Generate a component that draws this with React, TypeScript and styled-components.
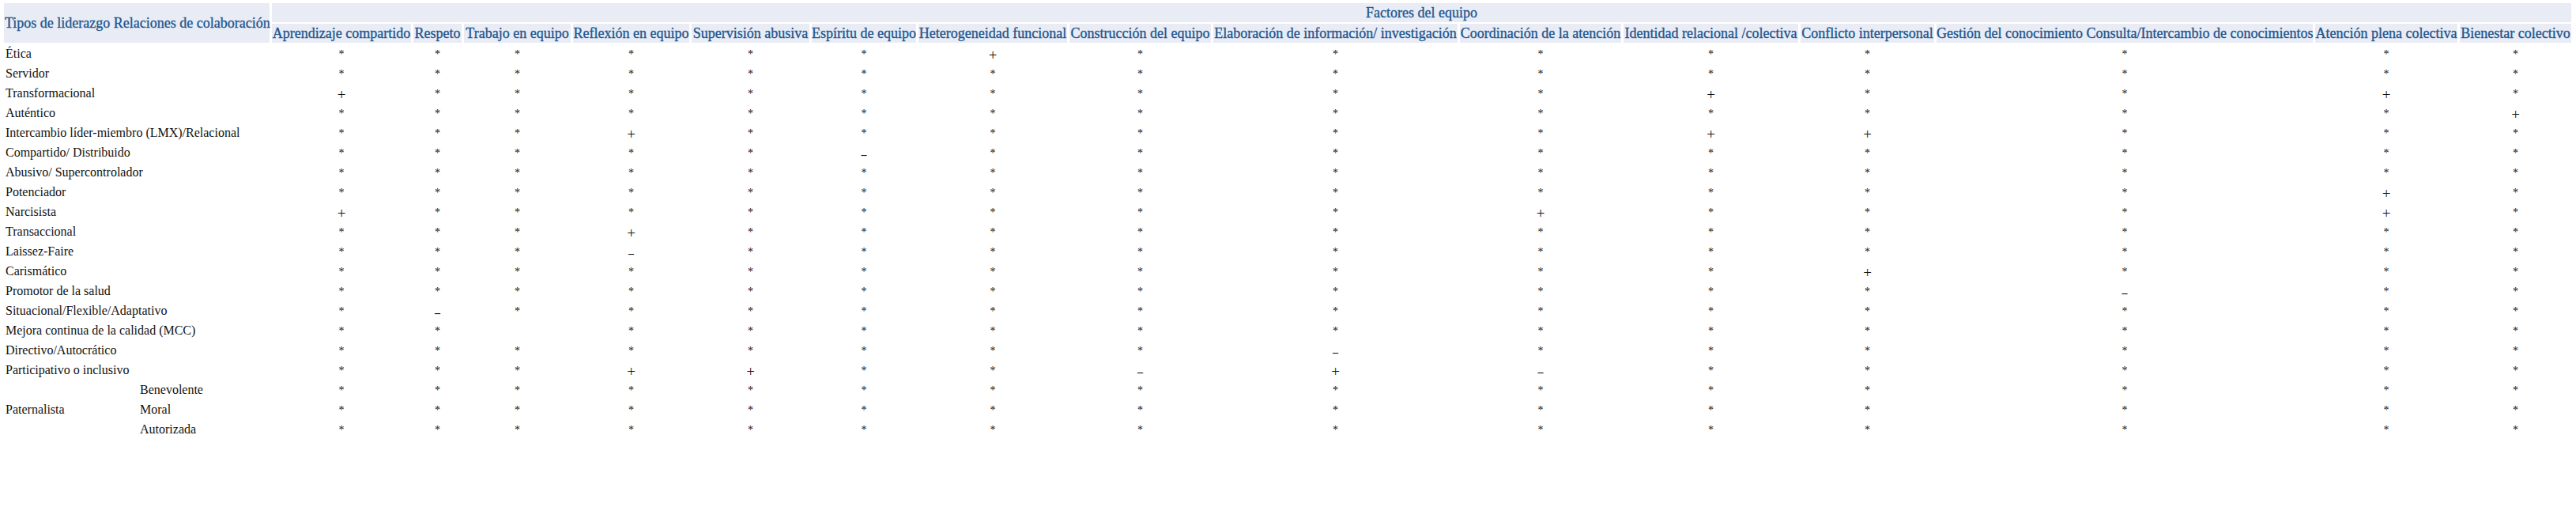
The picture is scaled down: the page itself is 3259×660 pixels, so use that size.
import styled, { createGlobalStyle } from "styled-components";

const GlobalStyle = createGlobalStyle`
    html, body {
        margin: 0;
        padding: 0;
        background: #ffffff;
    }
    * {
        box-sizing: border-box;
    }
`;

const Page = styled.div`
    padding: 2px 0 0 2px;
    width: 3259px;
    height: 660px;
    overflow: hidden;
    font-family: "Liberation Serif", "Times New Roman", serif;
`;

const Table = styled.table`
    table-layout: fixed;
    width: 3254px;
    border-collapse: separate;
    border-spacing: 3px 2px;
`;

const Col = styled.col<{ $w: number }>`
    width: ${(p) => p.$w}px;
`;

const Head = styled.th<{ $left?: boolean }>`
    height: 24px;
    padding: 0 ${(p) => (p.$left ? "1px" : "0")};
    background: #e9ecf5;
    color: #1d5790;
    font-size: 18px;
    font-weight: normal;
    -webkit-text-stroke: 0.35px #1d5790;
    white-space: nowrap;
    overflow: visible;
    text-align: ${(p) => (p.$left ? "left" : "center")};
    vertical-align: middle;
`;

const Label = styled.td`
    height: 23px;
    padding: 0 0 0 2px;
    font-size: 16px;
    color: #111111;
    white-space: nowrap;
    vertical-align: middle;
`;

const Cell = styled.td`
    height: 23px;
    padding: 0;
    text-align: center;
    vertical-align: middle;
    font-size: 16px;
    color: #111111;
`;

const Mark = styled.span<{ $kind: string }>`
    display: inline-block;
    font-size: ${(p) => (p.$kind === "*" ? "14px" : p.$kind === "+" ? "19px" : "14px")};
    line-height: 1;
    position: relative;
    top: ${(p) => (p.$kind === "*" ? "0" : "2px")};
    font-weight: ${(p) => (p.$kind === "-" ? "bold" : "normal")};
`;

const labelWidths = [167, 166];
const columns: { title: string; w: number }[] = [
    { title: "Aprendizaje compartido", w: 176 },
    { title: "Respeto", w: 61 },
    { title: "Trabajo en equipo", w: 135 },
    { title: "Reflexión en equipo", w: 147 },
    { title: "Supervisión abusiva", w: 149 },
    { title: "Espíritu de equipo", w: 132 },
    { title: "Heterogeneidad funcional", w: 188 },
    { title: "Construcción del equipo", w: 179 },
    { title: "Elaboración de información/ investigación", w: 309 },
    { title: "Coordinación de la atención", w: 204 },
    { title: "Identidad relacional /colectiva", w: 221 },
    { title: "Conflicto interpersonal", w: 169 },
    { title: "Gestión del conocimiento Consulta/Intercambio de conocimientos", w: 476 },
    { title: "Atención plena colectiva", w: 180 },
    { title: "Bienestar colectivo", w: 141 },
];

interface Row {
    label: string;
    values: string;
}

const rows: Row[] = [
    { label: "Ética", values: "******+********" },
    { label: "Servidor", values: "***************" },
    { label: "Transformacional", values: "+*********+**+*" },
    { label: "Auténtico", values: "**************+" },
    { label: "Intercambio líder-miembro (LMX)/Relacional", values: "***+******++***" },
    { label: "Compartido/ Distribuido", values: "*****-*********" },
    { label: "Abusivo/ Supercontrolador", values: "***************" },
    { label: "Potenciador", values: "*************+*" },
    { label: "Narcisista", values: "+********+***+*" },
    { label: "Transaccional", values: "***+***********" },
    { label: "Laissez-Faire", values: "***-***********" },
    { label: "Carismático", values: "***********+***" },
    { label: "Promotor de la salud", values: "************-**" },
    { label: "Situacional/Flexible/Adaptativo", values: "*-*************" },
    { label: "Mejora continua de la calidad (MCC)", values: "** ************" },
    { label: "Directivo/Autocrático", values: "********-******" },
    { label: "Participativo o inclusivo", values: "***++**-+-*****" },
];

const paternalista: Row[] = [
    { label: "Benevolente", values: "***************" },
    { label: "Moral", values: "***************" },
    { label: "Autorizada", values: "***************" },
];

function Values({ values }: { values: string }) {
    return (
        <>
            {values.split("").map((v, i) => (
                <Cell key={i}>
                    {v !== " " && <Mark $kind={v}>{v === "-" ? "–" : v}</Mark>}
                </Cell>
            ))}
        </>
    );
}

function App() {
    return (
        <Page>
            <GlobalStyle />
            <Table>
                <colgroup>
                    {labelWidths.map((w, i) => (
                        <Col key={"l" + i} $w={w} />
                    ))}
                    {columns.map((c) => (
                        <Col key={c.title} $w={c.w} />
                    ))}
                </colgroup>
                <thead>
                    <tr>
                        <Head $left rowSpan={2} colSpan={2}>
                            Tipos de liderazgo Relaciones de colaboración
                        </Head>
                        <Head colSpan={columns.length}>Factores del equipo</Head>
                    </tr>
                    <tr>
                        {columns.map((c) => (
                            <Head key={c.title}>{c.title}</Head>
                        ))}
                    </tr>
                </thead>
                <tbody>
                    {rows.map((r) => (
                        <tr key={r.label}>
                            <Label colSpan={2}>{r.label}</Label>
                            <Values values={r.values} />
                        </tr>
                    ))}
                    {paternalista.map((r, i) => (
                        <tr key={r.label}>
                            {i === 0 && <Label rowSpan={3}>Paternalista</Label>}
                            <Label>{r.label}</Label>
                            <Values values={r.values} />
                        </tr>
                    ))}
                </tbody>
            </Table>
        </Page>
    );
}

export default App;
